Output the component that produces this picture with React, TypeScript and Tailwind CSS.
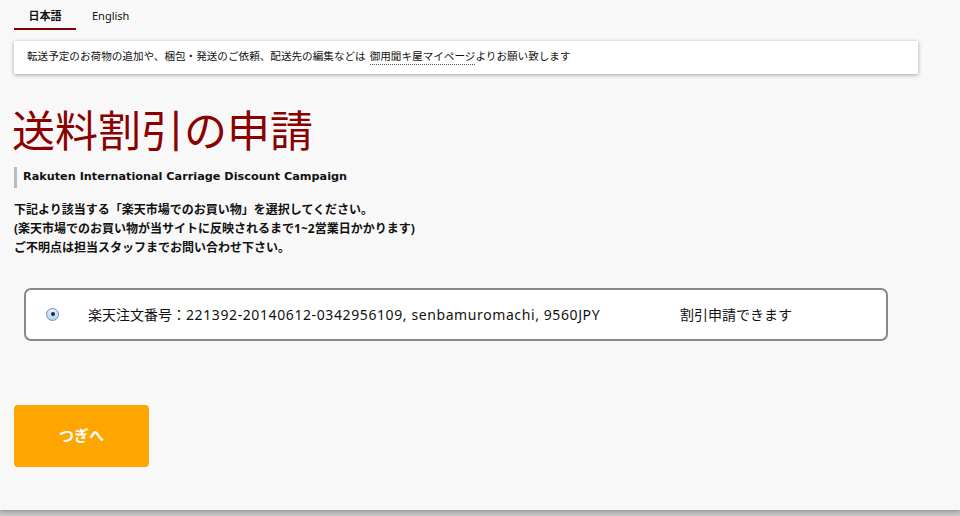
import React from "react";

const jp = "font-['Noto_Sans','Noto_Sans_CJK_JP',sans-serif]";

const App: React.FC = () => {
  return (
    <div className="min-h-[516px] bg-[#c8c8c8]">
      <div className={`h-[510px] bg-[#f8f8f8] shadow-[0_2px_4px_rgba(0,0,0,0.25)] ${jp} text-[#111]`}>
        {/* Language tabs */}
        <div className="flex pl-[14px] pt-[8px] text-[11px]">
          <div className="w-[62px] border-b-2 border-[#800000] pb-[3px] text-center font-bold">日本語</div>
          <div className="ml-[16px] pb-[3px]">English</div>
        </div>

        {/* Notice */}
        <div className="mx-[14px] mt-[11px] w-[904px] h-[33px] bg-white shadow-[0_1px_4px_rgba(0,0,0,0.35)] flex items-center pl-[13px] text-[10.6px]">
          転送予定のお荷物の追加や、梱包・発送のご依頼、配送先の編集などは
          <span className="ml-[4px] border-b border-dotted border-[#555]">御用聞キ屋マイページ</span>
          よりお願い致します
        </div>

        {/* Heading */}
        <h1 className="mt-[30px] ml-[12px] text-[43px] leading-[54px] text-[#8b0000] font-normal">送料割引の申請</h1>
        <div className="mt-[9px] ml-[14px] border-l-[3px] border-[#bbb] pl-[6px] h-[21px] flex items-center font-['DejaVu_Sans',sans-serif] text-[11.25px] font-bold">
          Rakuten International Carriage Discount Campaign
        </div>

        {/* Description */}
        <div className="mt-[12px] ml-[14px] text-[12px] leading-[19px] font-bold">
          <p>下記より該当する「楽天市場でのお買い物」を選択してください。</p>
          <p>(楽天市場でのお買い物が当サイトに反映されるまで1~2営業日かかります)</p>
          <p>ご不明点は担当スタッフまでお問い合わせ下さい。</p>
        </div>

        {/* Order option */}
        <label className="mt-[31px] ml-[24px] w-[864px] h-[53px] flex items-center bg-white border-2 border-[#888] rounded-[7px] text-[14px]">
          <span className="ml-[20px] w-[13px] h-[13px] rounded-full border border-[#6b8db8] bg-gradient-to-b from-[#e6f0fb] to-[#b9d2ee] flex items-center justify-center">
            <span className="w-[4px] h-[4px] rounded-full bg-[#1b2a44]" />
          </span>
          <span className="ml-[29px] w-[592px]">
            楽天注文番号：<span className="tracking-[0.6px]">221392-20140612-0342956109, senbamuromachi, 9560JPY</span>
          </span>
          <span>割引申請できます</span>
        </label>

        {/* Next button */}
        <button className="mt-[64px] ml-[14px] w-[135px] h-[62px] rounded-[4px] bg-[#ffa500] text-white text-[15px] font-bold">
          つぎへ
        </button>
      </div>
    </div>
  );
};

export default App;
